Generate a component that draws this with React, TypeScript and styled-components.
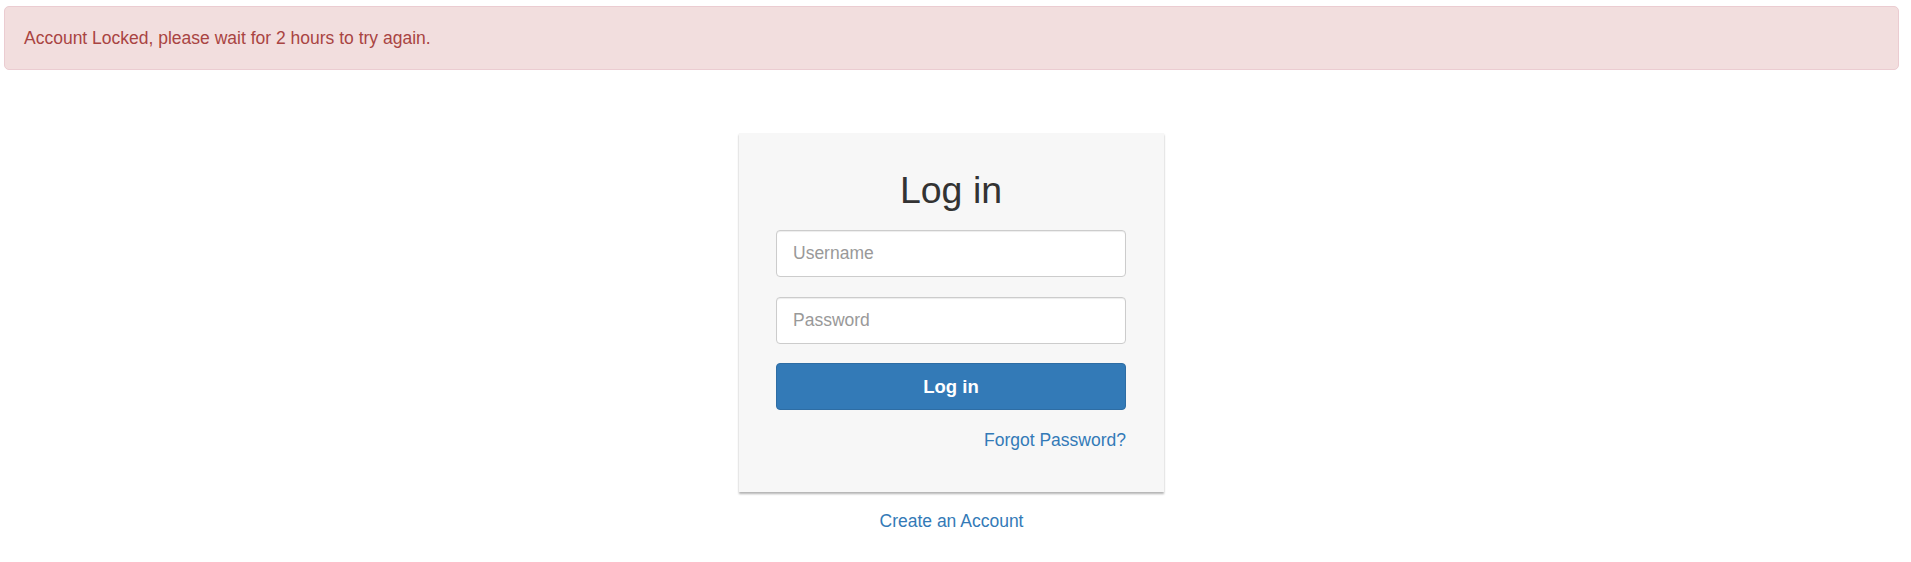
import styled, { createGlobalStyle } from "styled-components";

const GlobalStyle = createGlobalStyle`
  html, body {
    margin: 0;
    padding: 0;
    background: #fff;
  }
  body {
    font-family: "Liberation Sans", Arial, Helvetica, sans-serif;
    color: #333;
  }
  * {
    box-sizing: border-box;
  }
`;

const App = () => {
  return (
    <>
      <GlobalStyle />
      <Page>
        <Alert role="alert">Account Locked, please wait for 2 hours to try again.</Alert>
        <LoginWrap>
          <Card>
            <Title>Log in</Title>
            <Form onSubmit={(e) => e.preventDefault()}>
              <Input type="text" placeholder="Username" />
              <Input type="password" placeholder="Password" />
              <SubmitButton type="submit">Log in</SubmitButton>
            </Form>
            <ForgotRow>
              <Link href="#">Forgot Password?</Link>
            </ForgotRow>
          </Card>
          <CreateRow>
            <Link href="#">Create an Account</Link>
          </CreateRow>
        </LoginWrap>
      </Page>
    </>
  );
};

export default App;

const Page = styled.div`
  padding: 6px 12px 0 4px;
`;

const Alert = styled.div`
  padding: 19px 19px;
  background: #f2dede;
  border: 1px solid #ebccd1;
  border-radius: 5px;
  color: #a94442;
  font-size: 17.5px;
  line-height: 24px;
`;

const LoginWrap = styled.div`
  display: flex;
  flex-direction: column;
  align-items: center;
  margin-top: 63px;
`;

const Card = styled.div`
  width: 425px;
  padding: 37px 38px 39px 37px;
  background: #f7f7f7;
  box-shadow: 0 2px 2px rgba(0, 0, 0, 0.3);
`;

const Title = styled.h2`
  margin: 0 0 19px;
  text-align: center;
  font-size: 37.5px;
  font-weight: 400;
  line-height: 41px;
  color: #333;
`;

const Form = styled.form`
  display: flex;
  flex-direction: column;
  gap: 20px;
`;

const Input = styled.input`
  width: 100%;
  height: 47px;
  padding: 0 16px;
  border: 1px solid #ccc;
  border-radius: 4px;
  background: #fff;
  font-family: inherit;
  font-size: 17.5px;
  color: #555;
  box-shadow: inset 0 1px 1px rgba(0, 0, 0, 0.075);

  &::placeholder {
    color: #999;
  }
`;

const SubmitButton = styled.button`
  width: 100%;
  height: 47px;
  margin-top: -1px;
  border: 1px solid #2e6da4;
  border-radius: 4px;
  background: #337ab7;
  color: #fff;
  font-family: inherit;
  font-size: 18.5px;
  font-weight: 700;
  cursor: pointer;
`;

const ForgotRow = styled.div`
  margin-top: 18px;
  text-align: right;
  font-size: 17.5px;
  line-height: 25px;
`;

const CreateRow = styled.div`
  margin-top: 17px;
  font-size: 17.5px;
  line-height: 25px;
`;

const Link = styled.a`
  color: #337ab7;
  text-decoration: none;
`;
